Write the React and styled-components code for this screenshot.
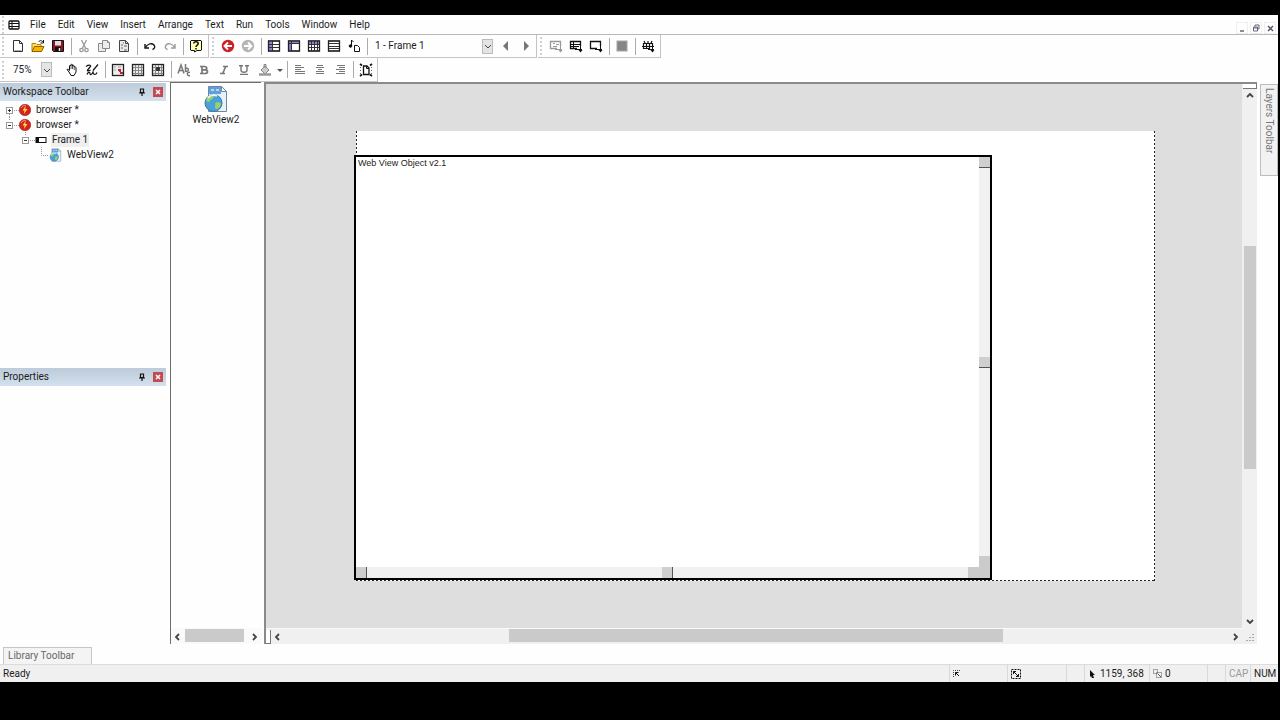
import styled, { createGlobalStyle } from "styled-components";

const GlobalStyle = createGlobalStyle`
  * {
    box-sizing: border-box;
  }
  body {
    margin: 0;
    background-color: #000;
    font-family: Roboto, "Open Sans", sans-serif;
    font-size: 10px;
    line-height: 14px;
    color: #1c1c1c;
  }
  button,
  select {
    font: inherit;
    color: inherit;
    margin: 0;
    padding: 0;
    border: none;
    background: none;
  }
`;

const Screen = styled.div`
  display: flex;
  flex-direction: column;
  min-height: 100vh;
  padding: 15px 2px 38px 0;
`;

const Window = styled.div`
  flex: 1;
  display: flex;
  flex-direction: column;
  background-color: #fefefe;
`;

/* menu bar */

const MenuBar = styled.header`
  display: flex;
  align-items: center;
  height: 20px;
  padding-right: 2px;
  border-bottom: 1px solid #b9b9b9;
`;

const Menus = styled.nav`
  display: flex;
  gap: 12px;
  flex: 1;
  padding-left: 10px;
`;

const WindowButtons = styled.div`
  display: flex;
  gap: 2px;
  align-self: flex-end;
`;

const WindowButton = styled.button`
  display: flex;
  width: 12px;
  height: 12px;
  border: 1px solid #efefef;
`;

/* toolbars */

const ToolbarRow = styled.div`
  display: flex;
  gap: 1px;
  height: ${(props) => props.$height || 23}px;
`;

const Toolbar = styled.div`
  display: flex;
  align-items: center;
  padding-right: ${(props) => props.$end || 0}px;
  border-right: 1px solid #c4c4c4;
  border-bottom: 1px solid #c4c4c4;
`;

const Grip = styled.span`
  width: 2px;
  height: 18px;
  margin: 0 4px 0 2px;
  border-left: 2px dotted #d0d0d0;
`;

const Separator = styled.span`
  width: 1px;
  height: 17px;
  margin: 0 2px 0 3px;
  background-color: #ababab;
`;

const ToolButton = styled.button`
  display: flex;
  align-items: center;
  justify-content: center;
  width: ${(props) => props.$width || 20}px;
  height: 20px;
`;

const Combo = styled.label`
  display: flex;
  align-items: center;
  width: ${(props) => props.$width}px;
  margin-right: ${(props) => props.$after}px;
  padding-left: 5px;
`;

const ComboSelect = styled.select`
  flex: 1;
  min-width: 0;
  appearance: none;
  outline: none;
`;

const ComboArrow = styled.span`
  display: flex;
  align-items: center;
  justify-content: center;
  width: 11px;
  height: 15px;
  border: 1px solid #bcbcbc;
  background-color: #e4e4e4;
`;

/* docked panels */

const Body = styled.div`
  flex: 1;
  display: flex;
  gap: 3px;
`;

const Dock = styled.aside`
  display: flex;
  flex-direction: column;
  width: 167px;
  padding: 1px 1px 0 0;
`;

const Panel = styled.section`
  flex: ${(props) => props.$size} 1 0;
`;

const PanelHeader = styled.header`
  display: flex;
  align-items: center;
  gap: 7px;
  height: 18px;
  padding: 0 3px;
  background-image: linear-gradient(#bdcbda, #d3e0ed);
`;

const PanelTitle = styled.h2`
  flex: 1;
  margin: 0;
  font-size: 10px;
  font-weight: 400;
`;

const PanelButton = styled.button`
  display: flex;
`;

const Tree = styled.ul`
  margin: 0;
  padding: 1px 0 0;
  list-style: none;
`;

const TreeRow = styled.li`
  display: flex;
  align-items: center;
  gap: 4px;
  height: 15px;
  padding-left: ${(props) => props.$indent}px;
`;

const TreeNode = styled.span`
  display: flex;
  align-items: center;
`;

const TreeLabel = styled.span`
  padding: 0 1px;
  background-color: ${(props) => (props.$selected ? "#efefef" : "transparent")};
`;

/* documents */

const ObjectPane = styled.section`
  display: flex;
  flex-direction: column;
  width: 91px;
  border-left: 1px solid #6d6d6d;
  border-top: 1px solid #6d6d6d;
`;

const ObjectList = styled.div`
  flex: 1;
`;

const ObjectItem = styled.button`
  display: flex;
  flex-direction: column;
  align-items: center;
  width: 100%;
  padding-top: 2px;
`;

const Editor = styled.section`
  flex: 1;
  display: grid;
  grid-template-columns: 1fr 15px;
  grid-template-rows: 1fr 16px;
  border-left: 2px solid #8a8a8a;
  border-top: 2px solid #8a8a8a;
`;

const Canvas = styled.main`
  position: relative;
  background-color: #dedede;
`;

const Frame = styled.div`
  position: absolute;
  top: 47px;
  left: 90px;
  width: 799px;
  height: 450px;
  background-color: #fff;
  background-image: repeating-linear-gradient(#222 0 2px, transparent 2px 4px),
    repeating-linear-gradient(#222 0 2px, transparent 2px 4px),
    repeating-linear-gradient(90deg, #222 0 2px, transparent 2px 4px);
  background-position: left, right, bottom;
  background-size: 1px 100%, 1px 100%, 100% 1px;
  background-repeat: no-repeat;
`;

const WebObject = styled.div`
  position: absolute;
  top: 71px;
  left: 88px;
  display: grid;
  grid-template-columns: 1fr 11px;
  grid-template-rows: 1fr 11px;
  width: 638px;
  height: 425px;
  border: 2px solid #000;
  background-color: #fff;
`;

const WebObjectText = styled.div`
  padding: 1px 2px;
  font-family: "Liberation Sans", Arial, sans-serif;
  font-size: 9px;
  line-height: 10px;
`;

const HandleTrack = styled.div`
  display: flex;
  flex-direction: ${(props) => (props.$vertical ? "column" : "row")};
  justify-content: space-between;
  background-color: #f1f1f1;
`;

const Handle = styled.span`
  width: 11px;
  height: 11px;
  border: solid #555;
  border-width: ${(props) => (props.$vertical ? "0 0 1px" : "0 1px 0 0")};
  background-color: #cfcfcf;
`;

const CornerHandle = styled.span`
  width: 11px;
  height: 11px;
  background-color: #cbcbcb;
`;

const Scrollbar = styled.div`
  display: flex;
  flex-direction: ${(props) => (props.$vertical ? "column" : "row")};
  align-items: center;
  background-color: #f0f0f0;
  border-top: ${(props) => (props.$vertical ? "none" : "1px solid #fafafa")};
`;

const PaneScrollbar = styled(Scrollbar)`
  height: 16px;
  background-color: #fafafa;
`;

const ScrollButton = styled.button`
  display: flex;
  align-items: center;
  justify-content: center;
  width: 14px;
  height: 14px;
`;

const ScrollTrack = styled.div`
  flex: 1;
  display: flex;
  flex-direction: ${(props) => (props.$vertical ? "column" : "row")};
  align-self: stretch;
`;

const ScrollSpace = styled.span`
  flex: ${(props) => props.$size} 1 0;
`;

const Thumb = styled.span`
  flex: ${(props) => props.$size} 1 0;
  margin: ${(props) => (props.$vertical ? "0 1px 0 2px" : "0 0 2px")};
  background-color: #cacaca;
`;

const SplitBox = styled.span`
  width: ${(props) => (props.$vertical ? 14 : 5)}px;
  height: ${(props) => (props.$vertical ? 5 : 14)}px;
  border: solid #777;
  border-width: 0 1px 1px 0;
  background-color: #fff;
`;

const ResizeCorner = styled.span`
  display: flex;
  align-items: flex-end;
  justify-content: flex-end;
  padding: 3px;
  background-color: #f0f0f0;
`;

const SideTabs = styled.aside`
  width: 18px;
  padding-top: 2px;
`;

const SideTab = styled.button`
  display: flex;
  width: 18px;
  height: 92px;
  padding: 3px 1px;
  border: 1px solid #bdbdbd;
  background-color: #f2f2f2;
  color: #777;
  writing-mode: vertical-rl;
`;

const BottomTabs = styled.div`
  display: flex;
  padding: 3px 0 0 3px;
`;

const BottomTab = styled.button`
  width: 89px;
  height: 17px;
  padding: 0 4px;
  border: 1px solid #c6c6c6;
  border-bottom: none;
  background-color: #f4f4f4;
  color: #686868;
  text-align: left;
`;

const StatusBar = styled.footer`
  display: flex;
  align-items: stretch;
  height: 18px;
  border-top: 1px solid #dcdcdc;
  background-color: #f0f0f0;
`;

const StatusText = styled.span`
  flex: 1;
  padding: 2px 3px;
`;

const StatusCell = styled.span`
  display: flex;
  align-items: center;
  gap: ${(props) => props.$gap || 2}px;
  width: ${(props) => props.$width}px;
  padding-left: 3px;
  border-left: 1px solid #d9d9d9;
  white-space: nowrap;
  color: ${(props) => (props.$off ? "#9a9a9a" : "inherit")};
`;

/* icons */

const Icon = ({ size = 14, width, height, children }) => (
  <svg
    width={width || size}
    height={height || size}
    viewBox={`0 0 ${width || size} ${height || size}`}
    fill="none"
    stroke="#111"
    aria-hidden="true"
  >
    {children}
  </svg>
);

const AppIcon = () => (
  <Icon width={12} height={10}>
    <rect x="1" y="1" width="10" height="8" rx="1" strokeWidth="1.3" />
    <path d="M4 1v8M1 3.5h10M1 6.5h10" />
  </Icon>
);

const NewIcon = () => (
  <Icon>
    <path d="M2.5 1.5h6l3 3v8h-9z" fill="#fff" stroke="#333" />
    <path d="M8.5 1.5v3h3" stroke="#333" />
    <path d="M3.5 11.5h7" stroke="#aaa" />
  </Icon>
);

const OpenIcon = () => (
  <Icon>
    <path d="M1 12V4.5h4l1 1h4v2" fill="#ffe05a" stroke="#b98500" />
    <path d="M1 12.5l2.5-5h9.500l-2.500 5z" fill="#f7b500" stroke="#8d6400" />
    <path d="M7.500 3c1.500-2 3.500-1.500 4.500 0M12.500 1v3h-3" />
  </Icon>
);

const SaveIcon = () => (
  <Icon>
    <path d="M1.500 1.500h11v11h-10l-1-1z" fill="#8d1420" />
    <rect x="4" y="2" width="6" height="4.500" fill="#ddd" stroke="none" />
    <rect x="4" y="8" width="6" height="4.500" fill="#111" stroke="none" />
    <path d="M8.500 9v3" stroke="#eee" strokeWidth="1.500" />
  </Icon>
);

const CutIcon = () => (
  <Icon>
    <g stroke="#999" strokeWidth="1.300">
      <path d="M4.500 1L8.500 9M9.500 1L5.500 9" />
      <circle cx="4.500" cy="11" r="1.700" />
      <circle cx="9.500" cy="11" r="1.700" />
    </g>
  </Icon>
);

const CopyIcon = () => (
  <Icon>
    <g stroke="#888" fill="#ececec">
      <path d="M1.500 4.500h7v8h-7z" />
      <path d="M5.500 1.500h5l2 2v6h-7z" />
      <path d="M10.500 1.500v2h2" />
    </g>
  </Icon>
);

const PasteIcon = () => (
  <Icon>
    <path d="M2.500 1.500h6l3 3v8h-9z" fill="#e9e9e9" stroke="#444" />
    <path d="M8.500 1.500v3h3" stroke="#444" />
    <path d="M4 6h2M7 7h3M4 9h2M7 11h3M6 4h1" stroke="#666" />
  </Icon>
);

const UndoIcon = () => (
  <Icon>
    <path d="M2 5v4h4" strokeWidth="1.400" />
    <path d="M2.500 8.500C4 5 8.500 3.500 11 6c1.500 2 .5 4-1.500 4.500" strokeWidth="1.300" />
  </Icon>
);

const RedoIcon = () => (
  <Icon>
    <path d="M12 5v4H8" stroke="#999" strokeWidth="1.400" />
    <path d="M11.500 8.500C10 5 5.500 3.500 3 6c-1.500 2-.5 4 1.500 4.500" stroke="#999" strokeWidth="1.300" />
  </Icon>
);

const HelpIcon = () => (
  <Icon>
    <path d="M2 1.500h10l.5.5v9l-.5.500H8L5.500 13v-1.500H2l-.5-.5V2z" fill="#ffffb5" />
    <path d="M4.800 4.500c0-2.500 4.400-2.300 4.400.2C9.200 6.200 7 6 7 8M7 9v1.500" strokeWidth="1.500" />
  </Icon>
);

const ArrowBall = ({ color, forward }) => (
  <Icon>
    <circle cx="7" cy="7" r="6.200" fill={color} stroke="none" />
    <path
      d={forward ? "M3 7h6M7 3.500L10.500 7 7 10.500" : "M11 7H5M7 3.500L3.500 7 7 10.500"}
      stroke="#fff"
      strokeWidth="1.800"
    />
  </Icon>
);

const TableIcon = ({ lines, accent }) => (
  <Icon>
    <rect x="1.500" y="2" width="11" height="10" fill="#fff" />
    {accent && <path d={accent} fill="#8a84d6" stroke="none" />}
    <path d={lines} stroke="#333" />
    <rect x="1.500" y="2" width="11" height="10" strokeWidth="1.300" stroke="#222" />
  </Icon>
);

const SoundIcon = () => (
  <Icon>
    <path d="M4.500 7V1l2 2" />
    <circle cx="3.500" cy="7" r="1.300" fill="#111" />
    <path d="M7.500 6.500h3l2 2v4h-5z" fill="#fff" />
  </Icon>
);

const TriangleIcon = ({ right }) => (
  <Icon size={10}>
    <path d={right ? "M3 0l5 5-5 5z" : "M7 0L2 5l5 5z"} fill="#777" stroke="none" />
  </Icon>
);

const ChevronIcon = ({ d = "M1 3l3 3 3-3", bold }) => (
  <Icon size={8}>
    <path d={d} stroke="#444" strokeWidth={bold ? 1.8 : 1} />
  </Icon>
);

const InsertIcon = ({ lines, color = "#111" }) => (
  <Icon>
    <g stroke={color}>
      <path d="M11.500 7V2.500h-10v7H8" strokeWidth="1.300" />
      <path d={lines} />
      <path d="M6 10.500h7M11.500 7v6" />
      <path d="M9.500 11h4l-2 2.500z" fill={color} stroke="none" />
    </g>
  </Icon>
);

const StopIcon = () => (
  <Icon size={12}>
    <rect x="1" y="1" width="10" height="10" fill="#858585" stroke="#a5a5a5" />
  </Icon>
);

const TimelineIcon = () => (
  <Icon>
    <path d="M11.500 8V4.500h-9v5H9M5.500 4.500v5M8.500 4.500v5M1 7.500h12" strokeWidth="1.200" />
    <path d="M3 2l1 2M7 2v2M11 2l-1 2" strokeWidth="1.200" />
    <path d="M7 10.500h6M11.500 8v5" />
    <path d="M9.500 11h4l-2 2.500z" fill="#111" stroke="none" />
  </Icon>
);

const HandIcon = () => (
  <Icon>
    <path d="M4 9L2 6.500c1-1 2 .5 2.500 1V3c0-1 1.500-1 1.500 0V2c0-1 1.500-1 1.500 0v1c0-1 1.500-1 1.500 0v1c1-1 2 0 2 1v4l-2 3.500H6z" fill="#fff" />
    <path d="M6 3v3M7.500 3v3M9.200 4v3" strokeWidth=".7" />
  </Icon>
);

const PenIcon = () => (
  <Icon>
    <path
      d="M1 3.500c3-2 6-1.500 4 .5L2.500 7C2 8.500 4 8 5.500 7M13 1.500L8 7.500M2 11.500c1-3 3-2.500 3-1s1.500 2 3-1.500c.5 3.500 3 3 4 .5"
      strokeWidth="1.200"
    />
  </Icon>
);

const GridIcon = ({ children }) => (
  <Icon>
    <rect x="1.500" y="1.500" width="11" height="11" fill="#eee" stroke="#222" strokeWidth="1.300" />
    {children}
  </Icon>
);

const FontIcon = () => (
  <Icon>
    <path
      d="M1 10.500L4 2l3 8.500M2 7.500h4M8.500 1v8M8.500 5.500c3.500-1.500 4 3.500 0 3M13 9.500c-3.500-1-3.500 4 0 3"
      stroke="#777"
      strokeWidth="1.500"
    />
  </Icon>
);

const BoldIcon = () => (
  <Icon size={10}>
    <path d="M1 1.500h4.500c3 0 3 3.300 0 3.300H3M5.500 4.800c4 0 4 3.700 0 3.700H1M3 1.500v7" stroke="#777" strokeWidth="1.700" />
  </Icon>
);

const ItalicIcon = () => (
  <Icon size={10}>
    <path d="M4 1.500h5M1 8.500h5M6.700 1.500l-3 7" stroke="#777" strokeWidth="1.600" />
  </Icon>
);

const UnderlineIcon = () => (
  <Icon size={10}>
    <path d="M0 .8h4M6 .8h4M2 1v4c0 3 6 3 6 0V1M1 9.500h8" stroke="#777" strokeWidth="1.400" />
  </Icon>
);

const FillIcon = () => (
  <Icon>
    <path d="M3 7l4-4 4 4-4 4zM6 5V1.500h2V5" fill="#ccc" stroke="#888" />
    <path d="M1 11.500h12" stroke="#999" strokeWidth="2.500" />
  </Icon>
);

const AlignIcon = ({ d }) => (
  <Icon size={10}>
    <path d={d} stroke="#777" />
  </Icon>
);

const FitIcon = () => (
  <Icon>
    <path d="M4.500 3h3.500l2 2v6.500H4.500z" strokeWidth="1.300" />
    <path d="M7.500 3v2.500H10" />
    <path d="M1 1l2 1.500M13 1l-2 1.500M1 13l2-1.500M13 13l-2-1.500" strokeWidth="1.700" />
    <path d="M1.500 4v7M12.500 4v7" stroke="#666" strokeDasharray="1 2" />
  </Icon>
);

const PinIcon = () => (
  <Icon size={8}>
    <path d="M2.500 1h3v3.500h-3zM1 5h6M4 5v3M5.500 1v4" strokeWidth="1.200" />
  </Icon>
);

const CloseIcon = () => (
  <Icon size={10}>
    <rect width="10" height="10" fill="#c34a4f" stroke="none" />
    <path d="M3 3l4 4M7 3L3 7" stroke="#fff" strokeWidth="1.500" />
  </Icon>
);

const BrowserIcon = () => (
  <Icon size={12}>
    <circle cx="6" cy="6" r="5.800" fill="#d3231b" stroke="#8b1713" strokeWidth=".5" />
    <path d="M2 4c1-2 3-3 5-2" stroke="#f39a8c" />
    <path d="M6.500 2L3.500 6.500h2L5 10l3.500-5H6.300z" fill="#ffd64a" stroke="none" />
  </Icon>
);

const FrameIcon = () => (
  <Icon width={12} height={8}>
    <rect x="1" y="1.500" width="10" height="5" />
    <path d="M1.500 2h2v4h-2z" fill="#111" />
  </Icon>
);

const WebViewIcon = ({ width, height }) => (
  <svg width={width} height={height} viewBox="0 0 24 28" fill="none" aria-hidden="true">
    <path d="M4.500 1.500h13l5 5v20h-18z" fill="#e6f1fb" stroke="#6f879f" />
    <path d="M5 2h12v7H5z" fill="#5f9fda" />
    <path d="M17.500 1.500v5h5z" fill="#fff" stroke="#6f879f" />
    <path d="M7 5h3M12 5h3" stroke="#b6d7f1" strokeWidth="2" />
    <circle cx="9.500" cy="18" r="8.500" fill="#4aa0dc" stroke="#3a78a8" />
    <path
      d="M2 15c1-4 5-6 8-4 0 3-3 3-4 5-1 2-3 1-4-1zM11 18c3-2 5-1 6 1-1 4-3 5-5 5-2-2 0-4-1-6z"
      fill="#9bd065"
    />
    <path d="M4 13c2-3 6-4 9-2" stroke="#e2f6ff" strokeWidth="2" />
  </svg>
);

const ExpanderIcon = ({ open }) => (
  <svg width="14" height="15" viewBox="0 0 14 15" fill="none" aria-hidden="true">
    <path d={open ? "M4.500 0v4" : "M4.500 12v3"} stroke="#999" strokeDasharray="1 1" />
    <path d="M9 8.500h5" stroke="#999" strokeDasharray="1 1" />
    <rect x="1.500" y="5.500" width="6" height="6" fill="#fff" stroke="#999" />
    <path d={open ? "M3 8.500h3" : "M3 8.500h3M4.500 7v3"} stroke="#333" />
  </svg>
);

const BranchIcon = () => (
  <svg width="8" height="15" viewBox="0 0 8 15" fill="none" aria-hidden="true">
    <path d="M.5 0v8.500H8" stroke="#999" strokeDasharray="1 1" />
  </svg>
);

const menus = ["File", "Edit", "View", "Insert", "Arrange", "Text", "Run", "Tools", "Window", "Help"];

const standardTools = [
  { label: "New", icon: <NewIcon /> },
  { label: "Open", icon: <OpenIcon /> },
  { label: "Save", icon: <SaveIcon /> },
  null,
  { label: "Cut", icon: <CutIcon /> },
  { label: "Copy", icon: <CopyIcon /> },
  { label: "Paste", icon: <PasteIcon /> },
  null,
  { label: "Undo", icon: <UndoIcon /> },
  { label: "Redo", icon: <RedoIcon /> },
  null,
  { label: "Help contents", icon: <HelpIcon /> },
];

const navigateTools = [
  { label: "Back", icon: <ArrowBall color="#cf1f26" /> },
  { label: "Forward", icon: <ArrowBall color="#b5b5b5" forward /> },
  null,
  {
    label: "Storyboard editor",
    icon: <TableIcon accent="M2 2h3v10H2z" lines="M5.500 2v10M2 5.500h11M2 8.500h11" />,
  },
  {
    label: "Frame editor",
    icon: <TableIcon accent="M2 2h11v2H2zM2 2h2v10H2z" lines="M4.500 2v10M2 4.500h11" />,
  },
  {
    label: "Event editor",
    icon: <TableIcon accent="M2 2h11v3H2z" lines="M4.500 2v10M7.500 2v10M10.500 2v10M2 5.500h11M2 8.500h11" />,
  },
  { label: "Event list editor", icon: <TableIcon lines="M2 4.500h11M2 7.500h11M2 9.500h11" /> },
  { label: "Data elements", icon: <SoundIcon /> },
  null,
];

const insertTools = [
  { label: "New object", icon: <InsertIcon color="#999" lines="M4 4.500h2M7 5.500h3M4 7.500h4" /> },
  { label: "Run project", icon: <InsertIcon lines="M4.500 2v8M2 5.500h9M2 7.500h8" /> },
  { label: "Run frame", icon: <InsertIcon lines="" /> },
  null,
  { label: "Stop", icon: <StopIcon /> },
  null,
  { label: "Build and run", icon: <TimelineIcon /> },
];

const formatTools = [
  { label: "Pan", icon: <HandIcon /> },
  { label: "Path", icon: <PenIcon /> },
  null,
  {
    label: "Grid setup",
    icon: (
      <GridIcon>
        <path d="M3 4h2M3 7h2M7 4h3" stroke="#a99" />
        <path d="M7 7h2v2M9 10h3" stroke="#c32032" strokeWidth="2" />
      </GridIcon>
    ),
  },
  {
    label: "Show grid",
    icon: (
      <GridIcon>
        <path d="M4.500 2v10M7.500 2v10M10.500 2v10M2 4.500h10M2 7.500h10M2 10.500h10" stroke="#888" />
      </GridIcon>
    ),
  },
  {
    label: "Snap to grid",
    icon: (
      <GridIcon>
        <path d="M4.500 2v10M7.500 2v10M10.500 2v10M2 4.500h10M2 7.500h10M2 10.500h10" stroke="#888" />
        <path d="M5.500 4.500h3v3h-3z" fill="#333" stroke="#333" />
      </GridIcon>
    ),
  },
  null,
  { label: "Font", icon: <FontIcon /> },
  { label: "Bold", icon: <BoldIcon /> },
  { label: "Italic", icon: <ItalicIcon /> },
  { label: "Underline", icon: <UnderlineIcon /> },
  { label: "Text color", icon: <FillIcon />, width: 22 },
  {
    label: "More colors",
    width: 8,
    icon: (
      <Icon size={6}>
        <path d="M0 2h6L3 5z" fill="#555" stroke="none" />
      </Icon>
    ),
  },
  null,
  { label: "Align left", icon: <AlignIcon d="M0 .5h6M0 2.500h9M0 4.500h6M0 6.500h10M0 8.500h10" /> },
  { label: "Align center", icon: <AlignIcon d="M2 .5h6M1 2.500h8M3 4.500h4M1 6.500h8M1 8.500h8" /> },
  { label: "Align right", icon: <AlignIcon d="M2 .5h8M4 2.500h6M1 4.500h9M4 6.500h6M1 8.500h9" /> },
  null,
  { label: "Fit frame", icon: <FitIcon /> },
];

const Tools = ({ items }) =>
  items.map((item, i) =>
    item ? (
      <ToolButton key={i} $width={item.width} aria-label={item.label}>
        {item.icon}
      </ToolButton>
    ) : (
      <Separator key={i} />
    )
  );

const ComboBox = ({ label, value, width, after = 0 }) => (
  <Combo $width={width} $after={after}>
    <ComboSelect aria-label={label} defaultValue={value}>
      <option>{value}</option>
    </ComboSelect>
    <ComboArrow>
      <ChevronIcon />
    </ComboArrow>
  </Combo>
);

const DockHeader = ({ title }) => (
  <PanelHeader>
    <PanelTitle>{title}</PanelTitle>
    <PanelButton aria-label={`Pin ${title}`}>
      <PinIcon />
    </PanelButton>
    <PanelButton aria-label={`Close ${title}`}>
      <CloseIcon />
    </PanelButton>
  </PanelHeader>
);

const ScrollBars = ({ vertical, before, thumb, after }) => (
  <>
    <ScrollButton aria-label={vertical ? "Scroll up" : "Scroll left"}>
      <ChevronIcon bold d={vertical ? "M1 5l3-3 3 3" : "M5 1L2 4l3 3"} />
    </ScrollButton>
    <ScrollTrack $vertical={vertical}>
      <ScrollSpace $size={before} />
      <Thumb $vertical={vertical} $size={thumb} />
      <ScrollSpace $size={after} />
    </ScrollTrack>
    <ScrollButton aria-label={vertical ? "Scroll down" : "Scroll right"}>
      <ChevronIcon bold d={vertical ? "M1 3l3 3 3-3" : "M3 1l3 3-3 3"} />
    </ScrollButton>
  </>
);

const App = () => {
  return (
    <Screen>
      <GlobalStyle />
      <Window>
        <MenuBar>
          <Grip />
          <AppIcon />
          <Menus>
            {menus.map((menu) => (
              <button key={menu}>{menu}</button>
            ))}
          </Menus>
          <WindowButtons>
            <WindowButton aria-label="Minimize">
              <Icon size={10}>
                <path d="M3 8h4" stroke="#667" strokeWidth="1.500" />
              </Icon>
            </WindowButton>
            <WindowButton aria-label="Restore">
              <Icon size={10}>
                <path d="M4 3.500V2h4v4H6.500M2.500 4h4v4h-4zM2.500 5h4" stroke="#667" />
              </Icon>
            </WindowButton>
            <WindowButton aria-label="Close">
              <Icon size={10}>
                <path d="M3 3l5 5M8 3L3 8" stroke="#556" strokeWidth="1.500" />
              </Icon>
            </WindowButton>
          </WindowButtons>
        </MenuBar>

        <ToolbarRow>
          <Toolbar $end={2}>
            <Grip />
            <Tools items={standardTools} />
          </Toolbar>
          <Toolbar>
            <Grip />
            <Tools items={navigateTools} />
            <ComboBox label="Frame" value="1 - Frame 1" width={123} after={3} />
            <ToolButton aria-label="Previous frame">
              <TriangleIcon />
            </ToolButton>
            <ToolButton aria-label="Next frame">
              <TriangleIcon right />
            </ToolButton>
          </Toolbar>
          <Toolbar $end={2}>
            <Grip />
            <Tools items={insertTools} />
          </Toolbar>
        </ToolbarRow>
        <ToolbarRow $height={24}>
          <Toolbar $end={1}>
            <Grip />
            <ComboBox label="Zoom" value="75%" width={44} after={10} />
            <Tools items={formatTools} />
          </Toolbar>
        </ToolbarRow>

        <Body>
          <Dock>
            <Panel $size={285}>
              <DockHeader title="Workspace Toolbar" />
              <Tree>
                <TreeRow $indent={5}>
                  <TreeNode>
                    <ExpanderIcon />
                    <BrowserIcon />
                  </TreeNode>
                  <TreeLabel>browser *</TreeLabel>
                </TreeRow>
                <TreeRow $indent={5}>
                  <TreeNode>
                    <ExpanderIcon open />
                    <BrowserIcon />
                  </TreeNode>
                  <TreeLabel>browser *</TreeLabel>
                </TreeRow>
                <TreeRow $indent={21}>
                  <TreeNode>
                    <ExpanderIcon open />
                    <FrameIcon />
                  </TreeNode>
                  <TreeLabel $selected>Frame 1</TreeLabel>
                </TreeRow>
                <TreeRow $indent={41}>
                  <TreeNode>
                    <BranchIcon />
                    <WebViewIcon width={13} height={14} />
                  </TreeNode>
                  <TreeLabel>WebView2</TreeLabel>
                </TreeRow>
              </Tree>
            </Panel>
            <Panel $size={276}>
              <DockHeader title="Properties" />
            </Panel>
          </Dock>

          <ObjectPane>
            <ObjectList>
              <ObjectItem>
                <WebViewIcon width={24} height={28} />
                WebView2
              </ObjectItem>
            </ObjectList>
            <PaneScrollbar>
              <ScrollBars before={0} thumb={60} after={3} />
            </PaneScrollbar>
          </ObjectPane>

          <Editor>
            <Canvas>
              <Frame />
              <WebObject>
                <WebObjectText>Web View Object v2.1</WebObjectText>
                <HandleTrack $vertical>
                  <Handle $vertical />
                  <Handle $vertical />
                  <CornerHandle />
                </HandleTrack>
                <HandleTrack>
                  <Handle />
                  <Handle />
                  <CornerHandle />
                </HandleTrack>
                <CornerHandle />
              </WebObject>
            </Canvas>
            <Scrollbar $vertical>
              <SplitBox $vertical />
              <ScrollBars vertical before={143} thumb={223} after={145} />
            </Scrollbar>
            <Scrollbar>
              <SplitBox />
              <ScrollBars before={224} thumb={494} after={225} />
            </Scrollbar>
            <ResizeCorner>
              <Icon size={8}>
                <path d="M7 1v1M7 4v1M7 7v1M4 4v1M4 7v1M1 7v1" stroke="#aaa" strokeWidth="2" />
              </Icon>
            </ResizeCorner>
          </Editor>

          <SideTabs>
            <SideTab>Layers Toolbar</SideTab>
          </SideTabs>
        </Body>

        <BottomTabs>
          <BottomTab>Library Toolbar</BottomTab>
        </BottomTabs>

        <StatusBar>
          <StatusText>Ready</StatusText>
          <StatusCell $width={58}>
            <Icon size={8}>
              <path d="M.5 7V.5H8" stroke="#444" strokeDasharray="1 1" />
              <path d="M2.500 5.500v-3h3M2.500 2.500L6 6" />
            </Icon>
          </StatusCell>
          <StatusCell $width={59}>
            <Icon size={10}>
              <path d="M.5.5h9v9h-9z" strokeDasharray="2 1" />
              <path d="M2.500 5V2.500H5M2.500 2.500l5 5M7.500 5v2.500H5" />
            </Icon>
          </StatusCell>
          <StatusCell $width={18} />
          <StatusCell $width={65} $gap={4}>
            <Icon size={8}>
              <path d="M2 0l5 5H5l1 3H4L3 6 2 7z" fill="#111" stroke="none" />
            </Icon>
            1159, 368
          </StatusCell>
          <StatusCell $width={58}>
            <Icon size={10}>
              <path d="M.5.5h4v4h-4zM3.500 3.500h5v5h-5z" stroke="#555" strokeDasharray="1 1" />
              <path d="M5 5l3 3" stroke="#555" />
            </Icon>
            0
          </StatusCell>
          <StatusCell $width={18} />
          <StatusCell $width={25} $off>
            CAP
          </StatusCell>
          <StatusCell $width={28}>NUM</StatusCell>
        </StatusBar>
      </Window>
    </Screen>
  );
};

export default App;
